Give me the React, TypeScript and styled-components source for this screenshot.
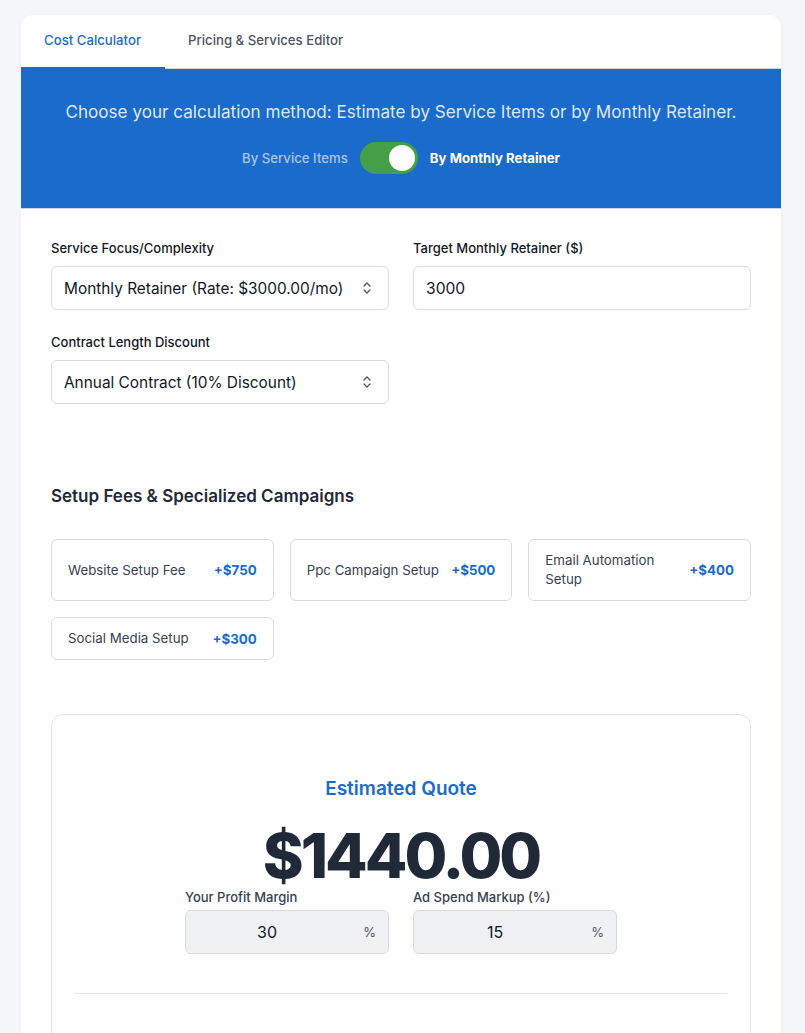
import React, { useState } from "react";
import styled, { createGlobalStyle } from "styled-components";

const GlobalStyle = createGlobalStyle`
  * { box-sizing: border-box; }
  body {
    margin: 0;
    background: #f5f6fa;
    font-family: Inter, "Noto Sans", Arial, sans-serif;
    color: #1f2937;
  }
`;

const setupFees = [
  { name: "Website Setup Fee", price: 750 },
  { name: "Ppc Campaign Setup", price: 500 },
  { name: "Email Automation Setup", price: 400 },
  { name: "Social Media Setup", price: 300 },
];

const App: React.FC = () => {
  const [retainer, setRetainer] = useState(true);

  return (
    <>
      <GlobalStyle />
      <Page>
        <Card>
          <Tabs>
            <Tab $active>Cost Calculator</Tab>
            <Tab>Pricing &amp; Services Editor</Tab>
          </Tabs>
          <Banner>
            <BannerText>
              Choose your calculation method: Estimate by Service Items or by
              Monthly Retainer.
            </BannerText>
            <ToggleRow>
              <ToggleLabel $on={!retainer}>By Service Items</ToggleLabel>
              <Switch $on={retainer} onClick={() => setRetainer(!retainer)}>
                <Knob $on={retainer} />
              </Switch>
              <ToggleLabel $on={retainer}>By Monthly Retainer</ToggleLabel>
            </ToggleRow>
          </Banner>

          <Body>
            <FormGrid>
              <Field>
                <Label>Service Focus/Complexity</Label>
                <SelectBox>
                  <span>Monthly Retainer (Rate: $3000.00/mo)</span>
                  <Chevron />
                </SelectBox>
              </Field>
              <Field>
                <Label>Target Monthly Retainer ($)</Label>
                <TextInput defaultValue="3000" />
              </Field>
              <Field>
                <Label>Contract Length Discount</Label>
                <SelectBox>
                  <span>Annual Contract (10% Discount)</span>
                  <Chevron />
                </SelectBox>
              </Field>
            </FormGrid>

            <SectionTitle>Setup Fees &amp; Specialized Campaigns</SectionTitle>
            <FeeGrid>
              {setupFees.map((f) => (
                <FeeCard key={f.name}>
                  <FeeName>{f.name}</FeeName>
                  <FeePrice>+${f.price}</FeePrice>
                </FeeCard>
              ))}
            </FeeGrid>

            <QuoteBox>
              <QuoteTitle>Estimated Quote</QuoteTitle>
              <QuoteAmount>$1440.00</QuoteAmount>
              <MarginRow>
                <MarginField>
                  <MarginLabel>Your Profit Margin</MarginLabel>
                  <PercentBox>
                    <span>30</span>
                    <Pct>%</Pct>
                  </PercentBox>
                </MarginField>
                <MarginField>
                  <MarginLabel>Ad Spend Markup (%)</MarginLabel>
                  <PercentBox>
                    <span>15</span>
                    <Pct>%</Pct>
                  </PercentBox>
                </MarginField>
              </MarginRow>
              <Divider />
            </QuoteBox>
          </Body>
        </Card>
      </Page>
    </>
  );
};

const Chevron: React.FC = () => (
  <svg width="10" height="14" viewBox="0 0 10 14" fill="none">
    <path
      d="M2 5l3-3 3 3M2 9l3 3 3-3"
      stroke="#4b5563"
      strokeWidth="1.3"
      strokeLinecap="round"
      strokeLinejoin="round"
    />
  </svg>
);

export default App;

const Page = styled.div`
  padding: 15px 24px 0 21px;
`;

const Card = styled.div`
  background: #fff;
  border-radius: 12px 12px 0 0;
  overflow: hidden;
  box-shadow: 0 1px 4px rgba(0, 0, 0, 0.04);
  min-height: 1040px;
`;

const Tabs = styled.div`
  display: flex;
  height: 54px;
  border-bottom: 1px solid #c9d6ea;
`;

const Tab = styled.div<{ $active?: boolean }>`
  padding: 0 24px 2px 23px;
  display: flex;
  align-items: center;
  font-size: 13.2px;
  font-weight: 500;
  color: ${(p) => (p.$active ? "#1a6bcc" : "#4b5563")};
  border-bottom: 2px solid ${(p) => (p.$active ? "#1a6bcc" : "transparent")};
  margin-bottom: -1px;
`;

const Banner = styled.div`
  background: #1a6bcc;
  padding: 32px 20px 34px;
  text-align: center;
  border-bottom: 1px solid #c9d6ea;
`;

const BannerText = styled.p`
  margin: 0;
  font-size: 17.1px;
  color: #dfe8f6;
`;

const ToggleRow = styled.div`
  display: flex;
  align-items: center;
  justify-content: center;
  gap: 12px;
  margin-top: 20px;
`;

const ToggleLabel = styled.span<{ $on: boolean }>`
  font-size: 13.2px;
  font-weight: ${(p) => (p.$on ? 700 : 500)};
  color: ${(p) => (p.$on ? "#ffffff" : "#a8c4ee")};
`;

const Switch = styled.div<{ $on: boolean }>`
  width: 58px;
  height: 32px;
  border-radius: 16px;
  background: ${(p) => (p.$on ? "#43a047" : "#9fb5d8")};
  padding: 3px;
  display: flex;
  justify-content: ${(p) => (p.$on ? "flex-end" : "flex-start")};
  cursor: pointer;
`;

const Knob = styled.div<{ $on: boolean }>`
  width: 26px;
  height: 26px;
  border-radius: 50%;
  background: #fff;
`;

const Body = styled.div`
  padding: 31px 30px 0;
`;

const FormGrid = styled.div`
  display: grid;
  grid-template-columns: 1fr 1fr;
  column-gap: 24px;
  row-gap: 24px;
`;

const Field = styled.div`
  display: flex;
  flex-direction: column;
`;

const Label = styled.label`
  font-size: 13px;
  font-weight: 500;
  color: #111827;
  margin-bottom: 10px;
`;

const SelectBox = styled.div`
  height: 44px;
  border: 1px solid #d9dbe1;
  border-radius: 6px;
  padding: 0 16px 0 12px;
  display: flex;
  align-items: center;
  justify-content: space-between;
  font-size: 15.4px;
  color: #111827;
`;

const TextInput = styled.input`
  height: 44px;
  border: 1px solid #d9dbe1;
  border-radius: 6px;
  padding: 0 12px;
  font-family: inherit;
  font-size: 15.6px;
  color: #111827;
  outline: none;
`;

const SectionTitle = styled.h3`
  margin: 82px 0 33px;
  font-size: 17px;
  font-weight: 600;
  color: #1f2937;
`;

const FeeGrid = styled.div`
  display: grid;
  grid-template-columns: repeat(3, 1fr);
  gap: 16px;
`;

const FeeCard = styled.div`
  border: 1px solid #d9dbe1;
  border-radius: 6px;
  padding: 11px 16px;
  min-height: 42px;
  display: flex;
  align-items: center;
  justify-content: space-between;
  gap: 12px;
`;

const FeeName = styled.span`
  font-size: 13.3px;
  line-height: 19px;
  color: #374151;
`;

const FeePrice = styled.span`
  font-size: 13.3px;
  font-weight: 700;
  color: #1a6bcc;
  white-space: nowrap;
`;

const QuoteBox = styled.div`
  margin-top: 54px;
  border: 1px solid #e2e4e8;
  border-radius: 12px;
  padding: 62px 23px 60px;
  display: flex;
  flex-direction: column;
  align-items: center;
`;

const QuoteTitle = styled.h2`
  margin: 0;
  font-size: 19px;
  font-weight: 600;
  color: #1a6bcc;
`;

const QuoteAmount = styled.div`
  font-size: 62px;
  font-weight: 800;
  color: #1f2937;
  letter-spacing: -3px;
  line-height: 1;
  margin-top: 25px;
`;

const MarginRow = styled.div`
  display: flex;
  gap: 24px;
  margin-top: 2px;
`;

const MarginField = styled.div`
  width: 204px;
  display: flex;
  flex-direction: column;
`;

const MarginLabel = styled.span`
  font-size: 13px;
  font-weight: 500;
  color: #374151;
  margin-bottom: 5px;
`;

const PercentBox = styled.div`
  height: 44px;
  background: #f0f1f5;
  border: 1px solid #d9dbe1;
  border-radius: 6px;
  position: relative;
  display: flex;
  align-items: center;
  justify-content: center;
  padding-right: 40px;
  font-size: 16px;
  color: #111827;
`;

const Pct = styled.span`
  position: absolute;
  right: 12px;
  font-size: 13px;
  color: #4b5563;
`;

const Divider = styled.hr`
  align-self: stretch;
  border: none;
  border-top: 1px solid #e2e4e8;
  margin: 39px 0 0;
`;
